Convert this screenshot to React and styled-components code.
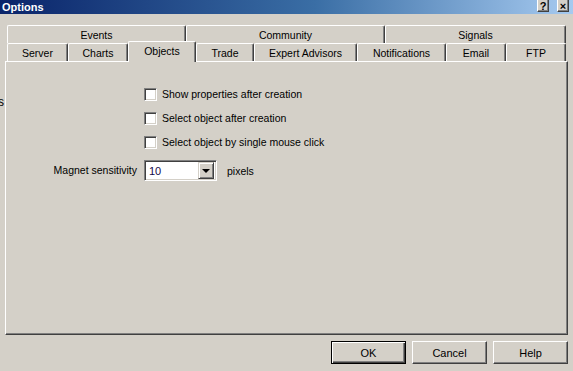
import React from "react";
import styled, { createGlobalStyle } from "styled-components";

const GlobalStyle = createGlobalStyle`
  html, body {
    margin: 0;
    padding: 0;
    background: #d4d0c8;
    overflow: hidden;
  }
  * { box-sizing: border-box; }
`;

const Window = styled.div`
  width: 573px;
  height: 371px;
  display: flex;
  flex-direction: column;
  background: #d4d0c8;
  font-family: "Liberation Sans", Arial, sans-serif;
  font-size: 10.5px;
  color: #000;
`;

const TitleBar = styled.div`
  height: 14px;
  display: flex;
  align-items: flex-start;
  justify-content: space-between;
  padding: 0 2px 0 2px;
  background: linear-gradient(to right, #0a246a 0%, #3a6ea5 55%, #a6caf0 100%);
`;

const Title = styled.span`
  color: #fff;
  font-weight: bold;
  font-size: 11px;
  line-height: 13px;
  padding-top: 1px;
`;

const TitleButtons = styled.div`
  display: flex;
  gap: 8px;
  margin-right: 2px;
`;

const TitleButton = styled.div`
  width: 12px;
  height: 12px;
  background: #d4d0c8;
  border-left: 1px solid #fff;
  border-right: 1px solid #404040;
  border-bottom: 1px solid #404040;
  box-shadow: inset -1px -1px #808080;
  display: flex;
  align-items: center;
  justify-content: center;
  font-weight: bold;
  font-size: 11px;
  line-height: 10px;
`;

const Body = styled.div`
  display: flex;
  flex-direction: column;
  padding: 11px 5px 0 0;
`;

const Middle = styled.div`
  display: flex;
`;

const Gutter = styled.div`
  width: 5px;
  overflow: hidden;
  display: flex;
  justify-content: flex-end;
  padding: 71px 1px 0 0;
  font-size: 12px;
  line-height: 12px;
`;

const Sheet = styled.div`
  display: flex;
  flex-direction: column;
`;

const TabStrip = styled.div`
  display: flex;
  flex-direction: column;
  margin-left: 2px;
`;

const TabRow = styled.div`
  display: flex;
  height: 18px;
`;

const Tab = styled.div`
  position: relative;
  width: ${(p) => p.$w}px;
  height: ${(p) => (p.$active ? 21 : 18)}px;
  margin-top: ${(p) => (p.$active ? -2 : 0)}px;
  padding-bottom: ${(p) => (p.$active ? 2 : 0)}px;
  z-index: ${(p) => (p.$active ? 2 : 0)};
  background: #d4d0c8;
  border-top: 1px solid #fff;
  border-left: 1px solid #fff;
  border-right: 1px solid #404040;
  box-shadow: inset -1px 0 #808080;
  border-radius: 2px 2px 0 0;
  display: flex;
  align-items: center;
  justify-content: center;
  white-space: nowrap;
`;

const Panel = styled.div`
  width: 563px;
  height: 274px;
  border-top: 1px solid #fff;
  border-left: 1px solid #fff;
  border-right: 1px solid #404040;
  border-bottom: 1px solid #404040;
  box-shadow: inset -1px -1px #808080;
  padding-top: 26px;
  display: grid;
  grid-template-columns: 131px auto;
  grid-auto-rows: 12px;
  column-gap: 7px;
  row-gap: 12px;
  align-content: start;
`;

const CheckRow = styled.label`
  grid-column: 2;
  display: flex;
  align-items: flex-start;
  gap: 5px;
  height: 12px;
`;

const Box = styled.span`
  width: 13px;
  height: 13px;
  background: #fff;
  border-top: 1px solid #808080;
  border-left: 1px solid #808080;
  border-right: 1px solid #fff;
  border-bottom: 1px solid #fff;
  box-shadow: inset 1px 1px #404040, inset -1px -1px #d4d0c8;
  flex: none;
`;

const CheckText = styled.span`
  line-height: 13px;
`;

const FieldLabel = styled.span`
  grid-column: 1;
  justify-self: end;
  line-height: 21px;
  height: 21px;
`;

const FieldRow = styled.div`
  grid-column: 2;
  display: flex;
  align-items: center;
  gap: 10px;
  height: 21px;
`;

const Combo = styled.div`
  width: 73px;
  height: 21px;
  background: #fff;
  border-top: 1px solid #808080;
  border-left: 1px solid #808080;
  border-right: 1px solid #fff;
  border-bottom: 1px solid #fff;
  box-shadow: inset 1px 1px #404040, inset -1px -1px #d4d0c8;
  display: flex;
  align-items: center;
  padding: 2px;
`;

const ComboValue = styled.span`
  flex: 1;
  padding-left: 2px;
  font-size: 11px;
  color: #14084a;
`;

const DropButton = styled.div`
  width: 16px;
  height: 17px;
  background: #d4d0c8;
  border-top: 1px solid #d4d0c8;
  border-left: 1px solid #d4d0c8;
  border-right: 1px solid #404040;
  border-bottom: 1px solid #404040;
  box-shadow: inset 1px 1px #fff, inset -1px -1px #808080;
  display: flex;
  align-items: center;
  justify-content: center;
`;

const Arrow = styled.span`
  width: 0;
  height: 0;
  border-left: 4px solid transparent;
  border-right: 4px solid transparent;
  border-top: 4px solid #000;
  margin-top: 1px;
`;

const Footer = styled.div`
  display: flex;
  justify-content: flex-end;
  gap: 6px;
  margin-top: 6px;
`;

const Button = styled.div`
  width: 75px;
  height: 23px;
  background: #d4d0c8;
  font-size: 11px;
  border: 1px solid ${(p) => (p.$default ? "#000" : "#d4d0c8")};
  border-top-color: ${(p) => (p.$default ? "#000" : "#fff")};
  border-left-color: ${(p) => (p.$default ? "#000" : "#fff")};
  border-right-color: ${(p) => (p.$default ? "#000" : "#404040")};
  border-bottom-color: ${(p) => (p.$default ? "#000" : "#404040")};
  box-shadow: ${(p) =>
    p.$default
      ? "inset 1px 1px #fff, inset -1px -1px #404040, inset -2px -2px #808080"
      : "inset -1px -1px #808080"};
  display: flex;
  align-items: center;
  justify-content: center;
`;

const topTabs = [
  { label: "Events", w: 179 },
  { label: "Community", w: 199 },
  { label: "Signals", w: 181 },
];

const bottomTabs = [
  { label: "Server", w: 61 },
  { label: "Charts", w: 60 },
  { label: "Objects", w: 68, active: true },
  { label: "Trade", w: 58 },
  { label: "Expert Advisors", w: 103 },
  { label: "Notifications", w: 89 },
  { label: "Email", w: 60 },
  { label: "FTP", w: 60 },
];

const checks = [
  "Show properties after creation",
  "Select object after creation",
  "Select object by single mouse click",
];

export default function App() {
  return (
    <>
      <GlobalStyle />
      <Window>
        <TitleBar>
          <Title>Options</Title>
          <TitleButtons>
            <TitleButton>?</TitleButton>
            <TitleButton>×</TitleButton>
          </TitleButtons>
        </TitleBar>
        <Body>
          <Middle>
            <Gutter>s</Gutter>
            <Sheet>
              <TabStrip>
                <TabRow>
                  {topTabs.map((t) => (
                    <Tab key={t.label} $w={t.w}>
                      {t.label}
                    </Tab>
                  ))}
                </TabRow>
                <TabRow>
                  {bottomTabs.map((t) => (
                    <Tab key={t.label} $w={t.w} $active={t.active}>
                      {t.label}
                    </Tab>
                  ))}
                </TabRow>
              </TabStrip>
              <Panel>
                {checks.map((c) => (
                  <CheckRow key={c}>
                    <Box />
                    <CheckText>{c}</CheckText>
                  </CheckRow>
                ))}
                <FieldLabel>Magnet sensitivity</FieldLabel>
                <FieldRow>
                  <Combo>
                    <ComboValue>10</ComboValue>
                    <DropButton>
                      <Arrow />
                    </DropButton>
                  </Combo>
                  <span>pixels</span>
                </FieldRow>
              </Panel>
            </Sheet>
          </Middle>
          <Footer>
            <Button $default>OK</Button>
            <Button>Cancel</Button>
            <Button>Help</Button>
          </Footer>
        </Body>
      </Window>
    </>
  );
}
